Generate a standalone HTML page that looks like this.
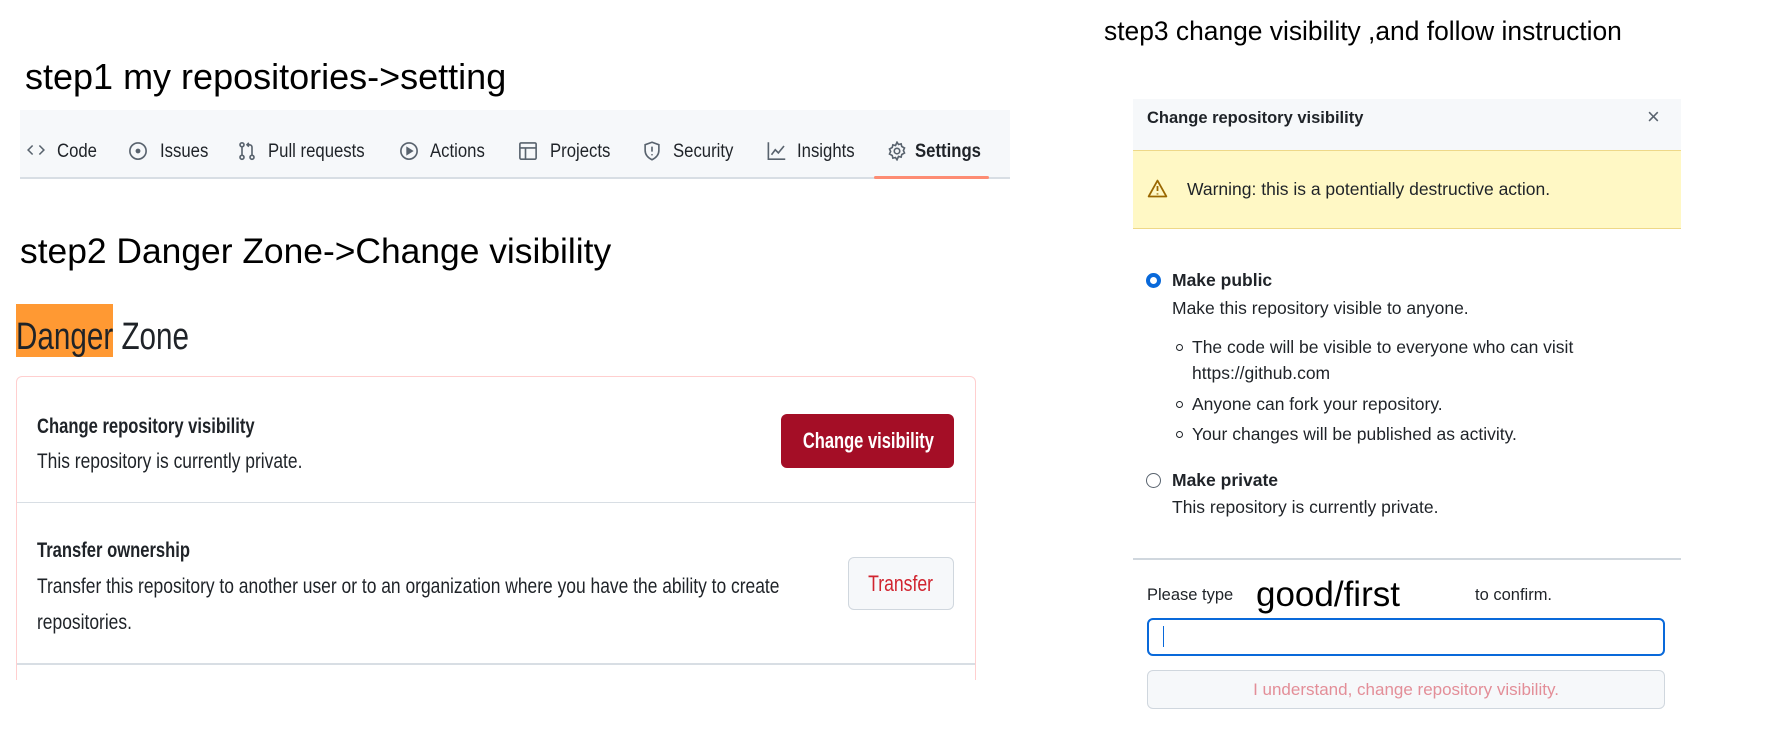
<!DOCTYPE html>
<html><head><meta charset="utf-8"><style>
*{margin:0;padding:0;box-sizing:border-box}
body{width:1773px;height:746px;background:#fff;position:relative;overflow:hidden;font-family:"Liberation Sans",sans-serif;color:#1f2328}
.a{position:absolute;white-space:nowrap}
.n{display:inline-block;transform:scaleX(.88);transform-origin:left center}
.nav{position:absolute;left:20px;top:110px;width:990px;height:69px;background:#f6f8fa;border-bottom:2px solid #d8dee4}
.nv{position:absolute;top:152px;transform:translateY(-50%);font-size:19px;color:#1f2328}
.ic{position:absolute;top:141px}
.dlg{font-size:17.5px;color:#1f2328}
</style></head><body>
<div class="a" style="left:25px;top:56px;font-size:36px;color:#000">step1 my repositories-&gt;setting</div>

<div class="nav"></div>
<svg class="ic" style="left:26px" width="20" height="18" viewBox="0 0 16 16" fill="none" stroke="#59636e" stroke-width="1.4"><path d="M5 4L1 8l4 4M11 4l4 4-4 4"/></svg>
<div class="nv" style="left:57px"><span class="n">Code</span></div>
<svg class="ic" style="left:128px" width="20" height="20" viewBox="0 0 16 16" fill="none" stroke="#59636e" stroke-width="1.3"><circle cx="8" cy="8" r="6.5"/><circle cx="8" cy="8" r="1.3" fill="#59636e"/></svg>
<div class="nv" style="left:160px"><span class="n">Issues</span></div>
<svg class="ic" style="left:237px" width="20" height="20" viewBox="0 0 16 16" fill="none" stroke="#59636e" stroke-width="1.3"><circle cx="4" cy="3" r="1.6"/><circle cx="4" cy="13" r="1.6"/><circle cx="12" cy="13" r="1.6"/><path d="M4 4.6v6.8M12 11.4V5a2 2 0 0 0-2-2H8M9.5 1.5L8 3l1.5 1.5"/></svg>
<div class="nv" style="left:268px"><span class="n">Pull requests</span></div>
<svg class="ic" style="left:399px" width="20" height="20" viewBox="0 0 16 16" fill="none" stroke="#59636e" stroke-width="1.3"><circle cx="8" cy="8" r="6.5"/><path d="M6.5 5.5v5l4-2.5z" fill="#59636e"/></svg>
<div class="nv" style="left:430px"><span class="n">Actions</span></div>
<svg class="ic" style="left:518px" width="20" height="20" viewBox="0 0 16 16" fill="none" stroke="#59636e" stroke-width="1.3"><rect x="1.5" y="1.5" width="13" height="13" rx="1"/><path d="M1.5 5.5h13M6 5.5v9"/></svg>
<div class="nv" style="left:550px"><span class="n">Projects</span></div>
<svg class="ic" style="left:642px" width="20" height="20" viewBox="0 0 16 16" fill="none" stroke="#59636e" stroke-width="1.3"><path d="M8 1L2.5 3v4.5c0 3.5 2.5 6 5.5 7.5 3-1.5 5.5-4 5.5-7.5V3z"/><path d="M8 4.5v4M8 10.5v1"/></svg>
<div class="nv" style="left:673px"><span class="n">Security</span></div>
<svg class="ic" style="left:766px" width="21" height="20" viewBox="0 0 16 16" fill="none" stroke="#59636e" stroke-width="1.3"><path d="M1.5 1v13.5H15M4 11l3-4 2.5 2.5L14 4"/></svg>
<div class="nv" style="left:797px"><span class="n">Insights</span></div>
<svg class="ic" style="left:887px" width="20" height="20" viewBox="0 0 16 16" fill="none" stroke="#59636e" stroke-width="1.3"><circle cx="8" cy="8" r="2.2"/><path d="M8 1l1.2 1.8 2.1-.5.5 2.1L14 5.6l-.9 2 .9 2-2.2 1.2-.5 2.1-2.1-.5L8 15l-1.2-1.8-2.1.5-.5-2.1L2 10.4l.9-2-.9-2 2.2-1.2.5-2.1 2.1.5z"/></svg>
<div class="nv" style="left:915px;font-weight:bold"><span class="n">Settings</span></div>
<div class="a" style="left:874px;top:176px;width:115px;height:3px;background:#fd8c73;border-radius:2px"></div>

<div class="a" style="left:20px;top:231px;font-size:35.4px;color:#000">step2 Danger Zone-&gt;Change visibility</div>

<div class="a" style="left:16px;top:304px;width:97px;height:53px;background:#ff9933"></div>
<div class="a" style="left:16px;top:316px;font-size:38px;color:#1f2328"><span class="n" style="transform:scaleX(.78)">Danger Zone</span></div>

<div class="a" style="left:16px;top:376px;width:960px;height:320px;border:1px solid #ffcfcf;border-radius:6px"></div>
<div class="a" style="left:0;top:680px;width:1000px;height:66px;background:#fff"></div>
<div class="a" style="left:17px;top:502px;width:958px;height:1px;background:#d8dee4"></div>
<div class="a" style="left:17px;top:663px;width:958px;height:2px;background:#d8dee4"></div>
<div class="a" style="left:37px;top:415px;font-size:21px;font-weight:bold"><span class="n" style="transform:scaleX(.79)">Change repository visibility</span></div>
<div class="a" style="left:37px;top:450px;font-size:21px"><span class="n" style="transform:scaleX(.83)">This repository is currently private.</span></div>
<div class="a" style="left:781px;top:414px;width:173px;height:54px;background:#a40e26;border-radius:6px;color:#fff;font-size:22px;font-weight:bold;text-align:center;line-height:54px"><span class="n" style="transform:scaleX(.75);transform-origin:center">Change visibility</span></div>
<div class="a" style="left:37px;top:539px;font-size:21px;font-weight:bold"><span class="n" style="transform:scaleX(.79)">Transfer ownership</span></div>
<div class="a" style="left:37px;top:575px;font-size:21px"><span class="n" style="transform:scaleX(.83)">Transfer this repository to another user or to an organization where you have the ability to create</span></div>
<div class="a" style="left:37px;top:611px;font-size:21px"><span class="n" style="transform:scaleX(.83)">repositories.</span></div>
<div class="a" style="left:848px;top:557px;width:106px;height:53px;background:#f6f8fa;border:1px solid #d0d7de;border-radius:6px;color:#d1242f;font-size:22px;text-align:center;line-height:51px"><span class="n" style="transform:scaleX(.8);transform-origin:center">Transfer</span></div>

<div class="a" style="left:1104px;top:16px;font-size:26.4px;color:#000">step3 change visibility ,and follow instruction</div>

<div class="a" style="left:1133px;top:99px;width:548px;height:51px;background:#f6f8fa"></div>
<div class="a dlg" style="left:1147px;top:109px;font-weight:bold;font-size:16.5px">Change repository visibility</div>
<div class="a" style="left:1647px;top:104px;font-size:22px;color:#59636e">×</div>
<div class="a" style="left:1133px;top:150px;width:548px;height:79px;background:#fff8c5;border-top:1px solid #eed888;border-bottom:1px solid #eed888"></div>
<svg class="a" style="left:1147px;top:179px" width="21" height="19" viewBox="0 0 16 15" fill="none" stroke="#9a6700" stroke-width="1.4"><path d="M8 1.2L1 13.8h14z" stroke-linejoin="round"/><path d="M8 5.5v4M8 11.3v.9"/></svg>
<div class="a dlg" style="left:1187px;top:179px">Warning: this is a potentially destructive action.</div>

<div class="a" style="left:1146px;top:273px;width:15px;height:15px;border-radius:50%;border:4px solid #0969da;background:#fff"></div>
<div class="a dlg" style="left:1172px;top:270px;font-weight:bold">Make public</div>
<div class="a dlg" style="left:1172px;top:298px">Make this repository visible to anyone.</div>
<div class="a" style="left:1176px;top:344px;width:7px;height:7px;border:1.3px solid #1f2328;border-radius:50%"></div>
<div class="a dlg" style="left:1192px;top:337px">The code will be visible to everyone who can visit</div>
<div class="a dlg" style="left:1192px;top:363px">https://github.com</div>
<div class="a" style="left:1176px;top:401px;width:7px;height:7px;border:1.3px solid #1f2328;border-radius:50%"></div>
<div class="a dlg" style="left:1192px;top:394px">Anyone can fork your repository.</div>
<div class="a" style="left:1176px;top:431px;width:7px;height:7px;border:1.3px solid #1f2328;border-radius:50%"></div>
<div class="a dlg" style="left:1192px;top:424px">Your changes will be published as activity.</div>
<div class="a" style="left:1146px;top:473px;width:15px;height:15px;border-radius:50%;border:1px solid #59636e;background:#fff"></div>
<div class="a dlg" style="left:1172px;top:470px;font-weight:bold">Make private</div>
<div class="a dlg" style="left:1172px;top:497px">This repository is currently private.</div>

<div class="a" style="left:1133px;top:558px;width:548px;height:2px;background:#d0d7de"></div>
<div class="a dlg" style="left:1147px;top:586px;font-size:16.5px">Please type</div>
<div class="a" style="left:1256px;top:575px;font-size:35px;color:#000">good/first</div>
<div class="a dlg" style="left:1475px;top:586px;font-size:16.5px">to confirm.</div>
<div class="a" style="left:1147px;top:618px;width:518px;height:38px;border:2px solid #0969da;border-radius:6px;background:#fff"></div>
<div class="a" style="left:1163px;top:626px;width:1px;height:21px;background:#0969da"></div>
<div class="a" style="left:1147px;top:670px;width:518px;height:39px;border:1px solid #d0d7de;border-radius:6px;background:#f6f8fa;color:#e38e98;font-size:17px;text-align:center;line-height:37px">I understand, change repository visibility.</div>
</body></html>
